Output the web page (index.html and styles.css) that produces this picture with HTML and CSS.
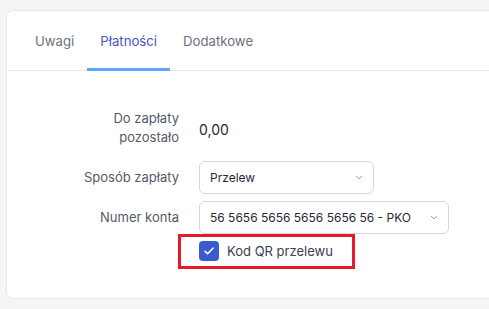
FILE: index.html
```html
<!DOCTYPE html>
<html lang="pl">
<head>
  <meta charset="UTF-8">
  <meta name="viewport" content="width=device-width, initial-scale=1.0">
  <title>Płatności</title>
  <link rel="stylesheet" href="styles.css">
</head>
<body>

<div class="card">
  <!-- Tabs -->
  <div class="tabs">
    <div class="tab">Uwagi</div>
    <div class="tab active">Płatności</div>
    <div class="tab">Dodatkowe</div>
  </div>

  <!-- Payment form -->
  <div class="form">
    <div class="label">Do zapłaty<br>pozostało</div>
    <div class="value">0,00</div>

    <div class="label">Sposób zapłaty</div>
    <div class="select short">
      <span>Przelew</span>
      <svg class="chevron" width="8" height="5" viewBox="0 0 8 5"><path d="M1 1l3 3 3-3" fill="none" stroke="#9aa1ad" stroke-width="1"/></svg>
    </div>

    <div class="label">Numer konta</div>
    <div class="select">
      <span>56 5656 5656 5656 5656 56 - PKO</span>
      <svg class="chevron" width="8" height="5" viewBox="0 0 8 5"><path d="M1 1l3 3 3-3" fill="none" stroke="#9aa1ad" stroke-width="1"/></svg>
    </div>

    <div></div>
    <div class="check-row">
      <div class="mark">
        <div class="checkbox">
          <svg width="12" height="10" viewBox="0 0 12 10"><path d="M2 5.2l2.6 2.6L10 2.2" fill="none" stroke="#fff" stroke-width="1.6" stroke-linecap="round" stroke-linejoin="round"/></svg>
        </div>
        <span>Kod QR przelewu</span>
      </div>
    </div>
  </div>
</div>

</body>
</html>
```

FILE: styles.css
```css
body {
  margin: 0;
  background-color: #f4f5f7;
  font-family: Inter, "Noto Sans", sans-serif;
  font-size: 13px;
  color: #1f2937;
}
.card {
  margin: 10px 0 0 6px;
  height: 289px;
  box-sizing: border-box;
  background-color: #fff;
  border: 1px solid #e6e8ec;
  border-right: none;
  border-radius: 7px 0 0 7px;
}
.tabs {
  display: flex;
  padding-left: 15px;
  border-bottom: 1px solid #e6e8ec;
}
.tab {
  padding: 0 13px;
  height: 58px;
  line-height: 60px;
  font-size: 13.2px;
  color: #6b7280;
  box-sizing: border-box;
}
.tab.active {
  color: #4a55c4;
  border-bottom: 3px solid #60a5fa;
  margin-bottom: -1px;
  height: 60px;
}
.form {
  display: grid;
  grid-template-columns: 172px 1fr;
  column-gap: 20px;
  row-gap: 7px;
  padding-top: 38px;
  align-items: center;
}
.label {
  text-align: right;
  color: #525b6a;
  line-height: 19px;
}
.value {
  font-size: 14px;
  color: #1f2937;
  padding-top: 2px;
}
.label:nth-child(3) {
  margin-top: 7px;
}
.select {
  display: flex;
  align-items: center;
  justify-content: space-between;
  width: 250px;
  height: 33px;
  box-sizing: border-box;
  padding: 0 10px 0 10px;
  border: 1px solid #d3d7de;
  border-radius: 6px;
  font-size: 12px;
  color: #1f2937;
}
.select.short {
  width: 175px;
  margin-top: 7px;
}
.check-row {
  margin: -7px 0 0 -21px;
}
.mark {
  display: inline-flex;
  align-items: center;
  gap: 8px;
  border: 3px solid #e8192c;
  padding: 4px 19px 5px 18px;
  color: #374151;
}
.checkbox {
  width: 20px;
  height: 20px;
  border-radius: 4px;
  background-color: #3a5bd0;
  display: flex;
  align-items: center;
  justify-content: center;
}
```
